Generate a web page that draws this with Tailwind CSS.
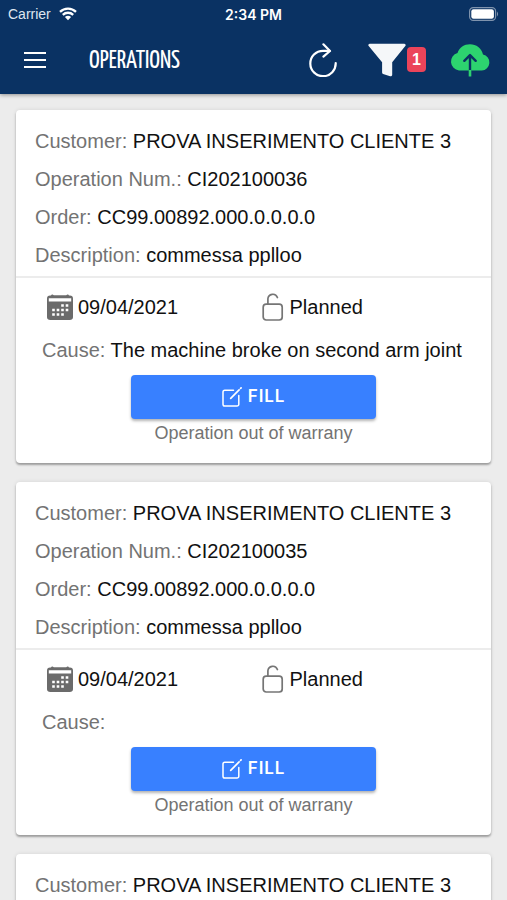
<!DOCTYPE html>
<html lang="en">
<head>
<meta charset="utf-8">
<meta name="viewport" content="width=device-width, initial-scale=1">
<title>Operations</title>
<script src="https://cdn.jsdelivr.net/npm/@tailwindcss/browser@4"></script>
</head>
<body class="flex h-screen flex-col overflow-hidden bg-[#ececec] font-['Liberation_Sans',Arial,sans-serif] text-[20px] text-[#111]">

<svg class="hidden" aria-hidden="true">
  <symbol id="calendar" viewBox="0 0 26 26">
    <path fill="#6b6b6b" d="M4 1.500a1.600 1.600 0 0 1 2.600-.4H19.400a1.600 1.600 0 0 1 2.600.4h.5A3.300 3.300 0 0 1 26 4.800v17.700A3.300 3.300 0 0 1 22.700 26H3.300A3.300 3.300 0 0 1 0 22.500V4.800A3.300 3.300 0 0 1 3.500 1.500z"/>
    <path fill="#fff" d="M6.600 0h12.800v1.200H6.600zM1.800 4.200h22.400v3.200H1.800z"/>
    <path fill="#fff" d="M14.200 10.200h2.600v2.600h-2.600zM18.700 10.200h2.600v2.600h-2.600zM5.200 14.700h2.600v2.600H5.200zM9.700 14.700h2.600v2.600H9.700zM14.200 14.700h2.600v2.600h-2.600zM18.700 14.700h2.600v2.600h-2.600zM5.200 19.200h2.600v2.600H5.200zM9.700 19.200h2.600v2.600H9.700zM14.200 19.200h2.600v2.600h-2.600z"/>
  </symbol>
  <symbol id="unlock" viewBox="0 0 22 28">
    <g fill="none" stroke="#757575" stroke-width="1.700" stroke-linecap="round" stroke-linejoin="round">
      <rect x="1.200" y="11.200" width="19" height="15.800" rx="3"/>
      <path d="M5.900 11V5.800a4.900 4.900 0 0 1 9.500-1.300"/>
    </g>
  </symbol>
  <symbol id="edit" viewBox="0 0 20 20">
    <g fill="none" stroke="#fff" stroke-width="1.500" stroke-linecap="round" stroke-linejoin="round">
      <path d="M11.500 3.200H2.800A1.800 1.800 0 0 0 1 5v12.200A1.800 1.800 0 0 0 2.800 19H15a1.800 1.800 0 0 0 1.800-1.800V8.500"/>
      <path d="M8.700 11.300l8.400-8.400M18.600 1.400l.5-.5" stroke-width="1.700"/>
    </g>
  </symbol>
</svg>

<header class="z-10 shrink-0 bg-[#0a3263] text-white shadow-[0_1px_4px_rgba(0,0,0,0.4)]">
  <div class="grid h-7 grid-cols-3 items-center px-2 text-[14px]">
    <div class="flex items-center gap-2 text-[#dfe6ef]">
      <span>Carrier</span>
      <svg class="h-[14px] w-[18px]" viewBox="0 0 18 14" fill="none" aria-label="Wi-Fi">
        <path d="M1 4.900a11.500 11.500 0 0 1 16 0M3.800 7.800a7.600 7.600 0 0 1 10.400 0" stroke="#fff" stroke-width="2.300"/>
        <path d="M5.900 10a4.700 4.700 0 0 1 6.200 0L9 13.300z" fill="#fff"/>
      </svg>
    </div>
    <time class="text-center font-['Inter','Liberation_Sans',sans-serif] font-semibold">2:34 PM</time>
    <svg class="h-[14px] w-[30px] justify-self-end" viewBox="0 0 30 14" aria-label="Battery full">
      <rect x=".6" y=".6" width="26" height="12.800" rx="3.600" fill="none" stroke="#7f93ad" stroke-width="1.200"/>
      <rect x="2.300" y="2.300" width="22.600" height="9.400" rx="2.200" fill="#fff"/>
      <path d="M28 4.500q2.200 2.500 0 5z" fill="#7f93ad"/>
    </svg>
  </div>
  <div class="flex h-[66px] items-center pr-[17px] pb-[3px] pl-6">
    <button type="button" aria-label="Menu" class="mr-[43px]">
      <svg class="h-[18px] w-[22px]" viewBox="0 0 22 18" stroke="#fff" stroke-width="2"><path d="M0 2h22M0 9h22M0 16h22"/></svg>
    </button>
    <h1 class="grow pt-1 font-['Yanone_Kaffeesatz','Roboto_Condensed','Roboto',sans-serif] text-[25px] leading-8">OPERATIONS</h1>
    <div class="flex items-center">
      <button type="button" aria-label="Refresh" class="mr-[31px]">
        <svg class="h-[34px] w-[28px]" viewBox="0 0 28 34" fill="none" stroke="#fff" stroke-width="2.200" stroke-linecap="round" stroke-linejoin="round">
          <path d="M26.700 20A12.700 12.700 0 1 1 14 7.800H20.500"/><path d="M14.400 1.300L21 8l-6.600 5.600"/>
        </svg>
      </button>
      <button type="button" aria-label="Filter, 1 active" class="mr-6 flex items-center gap-[1px]">
        <svg class="h-[34px] w-[38px]" viewBox="0 0 38 34" fill="#f5f7f9"><path d="M1.800.8h34.400a1.400 1.400 0 0 1 1.100 2.300L24.200 19.200v12.600a1.500 1.500 0 0 1-2.100 1.400l-7-2.200a1.600 1.600 0 0 1-1-1.500V19.200L.7 3.100A1.400 1.400 0 0 1 1.800.8z"/></svg>
        <span class="flex h-[25px] w-[19px] items-center justify-center rounded bg-[#eb445a] text-[16px] font-bold">1</span>
      </button>
      <button type="button" aria-label="Upload">
        <svg class="h-[34px] w-[40px]" viewBox="0 0 40 34">
          <path fill="#2dd36f" d="M9 27.500a9 9 0 0 1-1.500-17.600C9.500 4.500 14 1.200 20 1.200c6.300 0 11.600 4 13 10.300a8.100 8.100 0 0 1-1.200 16z"/>
          <path d="M20 27.500V12.500M14.300 17.800L20 12.100l5.700 5.700" fill="none" stroke="#0a3263" stroke-width="2.400" stroke-linecap="round" stroke-linejoin="round"/>
          <path d="M20 27v6.500" stroke="#2dd36f" stroke-width="2.600"/>
        </svg>
      </button>
    </div>
  </div>
</header>

<main class="flex grow flex-col gap-[19px] overflow-y-auto px-4 py-4 [scrollbar-width:none]">
  <article class="shrink-0 rounded bg-white pb-4 shadow-[0_2px_2px_rgba(0,0,0,0.3),0_0_4px_rgba(0,0,0,0.1)]">
    <div class="border-b-2 border-[#ececec] px-[19px] pt-3 pb-[2px] leading-[38px]">
      <p><span class="text-[#737373]">Customer:</span> PROVA INSERIMENTO CLIENTE 3</p>
      <p><span class="text-[#737373]">Operation Num.:</span> CI202100036</p>
      <p><span class="text-[#737373]">Order:</span> CC99.00892.000.0.0.0.0</p>
      <p><span class="text-[#737373]">Description:</span> commessa pplloo</p>
    </div>
    <div class="px-[26px] pt-[10px]">
      <div class="grid grid-cols-2 leading-[38px]">
        <div class="flex items-center gap-[5px] pl-[5px]"><svg class="size-[26px]" aria-hidden="true"><use href="#calendar"/></svg><time>09/04/2021</time></div>
        <div class="flex items-center gap-[6px] pl-2"><svg class="h-[28px] w-[22px]" aria-hidden="true"><use href="#unlock"/></svg>Planned</div>
      </div>
      <p class="mt-[5px] leading-[38px]"><span class="text-[#737373]">Cause:</span> The machine broke on second arm joint</p>
      <button type="button" class="mx-auto mt-[6px] flex h-11 w-[58%] items-center justify-center gap-[6px] rounded bg-[#3880ff] font-['Inter','Liberation_Sans',sans-serif] text-[17px] font-semibold tracking-wider text-white shadow-[0_2px_3px_rgba(0,0,0,0.3)]"><svg class="size-5" aria-hidden="true"><use href="#edit"/></svg>FILL</button>
      <p class="text-center text-[18px] leading-7 text-[#737373]">Operation out of warrany</p>
    </div>
  </article>

  <article class="shrink-0 rounded bg-white pb-4 shadow-[0_2px_2px_rgba(0,0,0,0.3),0_0_4px_rgba(0,0,0,0.1)]">
    <div class="border-b-2 border-[#ececec] px-[19px] pt-3 pb-[2px] leading-[38px]">
      <p><span class="text-[#737373]">Customer:</span> PROVA INSERIMENTO CLIENTE 3</p>
      <p><span class="text-[#737373]">Operation Num.:</span> CI202100035</p>
      <p><span class="text-[#737373]">Order:</span> CC99.00892.000.0.0.0.0</p>
      <p><span class="text-[#737373]">Description:</span> commessa pplloo</p>
    </div>
    <div class="px-[26px] pt-[10px]">
      <div class="grid grid-cols-2 leading-[38px]">
        <div class="flex items-center gap-[5px] pl-[5px]"><svg class="size-[26px]" aria-hidden="true"><use href="#calendar"/></svg><time>09/04/2021</time></div>
        <div class="flex items-center gap-[6px] pl-2"><svg class="h-[28px] w-[22px]" aria-hidden="true"><use href="#unlock"/></svg>Planned</div>
      </div>
      <p class="mt-[5px] leading-[38px]"><span class="text-[#737373]">Cause:</span></p>
      <button type="button" class="mx-auto mt-[6px] flex h-11 w-[58%] items-center justify-center gap-[6px] rounded bg-[#3880ff] font-['Inter','Liberation_Sans',sans-serif] text-[17px] font-semibold tracking-wider text-white shadow-[0_2px_3px_rgba(0,0,0,0.3)]"><svg class="size-5" aria-hidden="true"><use href="#edit"/></svg>FILL</button>
      <p class="text-center text-[18px] leading-7 text-[#737373]">Operation out of warrany</p>
    </div>
  </article>

  <article class="shrink-0 rounded bg-white pb-4 shadow-[0_2px_2px_rgba(0,0,0,0.3),0_0_4px_rgba(0,0,0,0.1)]">
    <div class="px-[19px] pt-3 pb-[2px] leading-[38px]">
      <p><span class="text-[#737373]">Customer:</span> PROVA INSERIMENTO CLIENTE 3</p>
    </div>
  </article>
</main>
</body>
</html>
